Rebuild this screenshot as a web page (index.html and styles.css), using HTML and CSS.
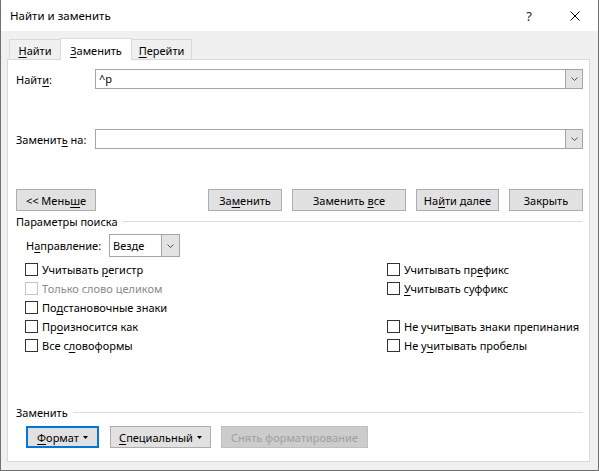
FILE: index.html
```html
<!DOCTYPE html>
<html lang="ru">
<head>
<meta charset="utf-8">
<title>Найти и заменить</title>
<link rel="stylesheet" href="styles.css">
</head>
<body>
<div class="window">
  <div class="titlebar">
    <span class="title">Найти и заменить</span>
    <span class="tb-btn help">?</span>
    <span class="tb-btn close">
      <svg width="10" height="10" viewBox="0 0 10 10"><path d="M0.5 0.5 L9.5 9.5 M9.5 0.5 L0.5 9.5" stroke="#000" stroke-width="1" fill="none"/></svg>
    </span>
  </div>
  <div class="content">
    <div class="tabs">
      <div class="tab tab-first"><span><u>Н</u>айти</span></div>
      <div class="tab active"><span><u>З</u>аменить</span></div>
      <div class="tab tab-last"><span><u>П</u>ерейти</span></div>
    </div>
    <div class="panel">
      <div class="field-row first">
        <span class="field-label">Найт<u>и</u>:</span>
        <div class="combo">
          <span class="combo-text">^p</span>
          <span class="combo-btn"><svg width="7" height="4" viewBox="0 0 7 4"><path d="M0.5 0.5 L3.5 3.5 L6.5 0.5" stroke="#505050" stroke-width="1" fill="none"/></svg></span>
        </div>
      </div>
      <div class="field-row second">
        <span class="field-label">Заменит<u>ь</u> на:</span>
        <div class="combo">
          <span class="combo-text"></span>
          <span class="combo-btn"><svg width="7" height="4" viewBox="0 0 7 4"><path d="M0.5 0.5 L3.5 3.5 L6.5 0.5" stroke="#505050" stroke-width="1" fill="none"/></svg></span>
        </div>
      </div>
      <div class="btn-row">
        <div class="btn w-less"><span>&lt;&lt; Мень<u>ш</u>е</span></div>
        <div class="spacer"></div>
        <div class="btn w-replace"><span>За<u>м</u>енить</span></div>
        <div class="btn w-all"><span>Заменить <u>в</u>се</span></div>
        <div class="btn w-next"><span>На<u>й</u>ти далее</span></div>
        <div class="btn w-close"><span>Закрыть</span></div>
      </div>
      <div class="group-head">
        <span>Параметры поиска</span>
        <span class="rule"></span>
      </div>
      <div class="dir-row">
        <span class="dir-label">Н<u>а</u>правление:</span>
        <div class="select">
          <span class="select-text">Везде</span>
          <span class="select-btn"><svg width="7" height="4" viewBox="0 0 7 4"><path d="M0.5 0.5 L3.5 3.5 L6.5 0.5" stroke="#505050" stroke-width="1" fill="none"/></svg></span>
        </div>
      </div>
      <div class="options">
        <label class="cb"><span class="box"></span><span>Учитывать <u>р</u>егистр</span></label>
        <label class="cb"><span class="box"></span><span>Учитывать пр<u>е</u>фикс</span></label>
        <label class="cb disabled"><span class="box"></span><span>Только слово целиком</span></label>
        <label class="cb"><span class="box"></span><span><u>У</u>читывать суффикс</span></label>
        <label class="cb"><span class="box"></span><span>По<u>д</u>становочные знаки</span></label>
        <span class="empty"></span>
        <label class="cb"><span class="box"></span><span>Пр<u>о</u>износится как</span></label>
        <label class="cb"><span class="box"></span><span>Не учит<u>ы</u>вать знаки препинания</span></label>
        <label class="cb"><span class="box"></span><span>Все с<u>л</u>овоформы</span></label>
        <label class="cb"><span class="box"></span><span>Не у<u>ч</u>итывать пробелы</span></label>
      </div>
      <div class="group-head bottom">
        <span>Заменить</span>
        <span class="rule"></span>
      </div>
      <div class="bottom-row">
        <div class="btn focused w-format"><span><u>Ф</u>ормат</span><svg class="tri" width="5" height="3" viewBox="0 0 5 3"><path d="M0 0 H5 L2.5 3 Z" fill="#000"/></svg></div>
        <div class="btn w-special"><span><u>С</u>пециальный</span><svg class="tri" width="5" height="3" viewBox="0 0 5 3"><path d="M0 0 H5 L2.5 3 Z" fill="#000"/></svg></div>
        <div class="btn disabled w-clear"><span>Снять форматирование</span></div>
      </div>
    </div>
  </div>
</div>
</body>
</html>
```
FILE: styles.css
```css
* { box-sizing: border-box; }
html, body { margin: 0; padding: 0; }
body {
  width: 599px;
  height: 471px;
  overflow: hidden;
  background: #f0f0f0;
  font-family: "Noto Sans", "Open Sans", sans-serif;
  font-size: 11px;
  color: #000;
}
u { text-underline-offset: 2px; }

.window {
  width: 599px;
  height: 471px;
  border: 1px solid #707070;
  border-top: none;
  display: flex;
  flex-direction: column;
  background: #f0f0f0;
}

.titlebar {
  height: 31px;
  flex: none;
  background: #fff;
  display: flex;
  align-items: center;
  padding-left: 9px;
}
.title { flex: 1; font-size: 11.5px; }
.tb-btn {
  width: 46px;
  height: 31px;
  display: flex;
  align-items: center;
  justify-content: center;
}
.help { font-size: 13px; color: #222; }

.content {
  flex: 1;
  display: flex;
  flex-direction: column;
  padding: 7px 8px 8px 6px;
}

.tabs {
  height: 21px;
  flex: none;
  display: flex;
  align-items: flex-end;
  padding-left: 2px;
  position: relative;
  z-index: 1;
}
.tab {
  height: 20px;
  border: 1px solid #d9d9d9;
  border-bottom: none;
  background: #f0f0f0;
  display: flex;
  align-items: center;
  justify-content: center;
  padding-top: 1px;
}
.tab-first { width: 51px; border-right: none; }
.tab-last { width: 60px; border-left: none; }
.tab.active {
  width: 72px;
  height: 22px;
  margin-bottom: -1px;
  background: #fff;
  padding-top: 1px;
}

.panel {
  flex: 1;
  background: #fff;
  border: 1px solid #d9d9d9;
  padding: 0 6px 13px 8px;
  display: flex;
  flex-direction: column;
}

.field-row {
  height: 20px;
  display: flex;
  align-items: center;
}
.field-row.first { margin-top: 9px; }
.field-row.second { margin-top: 40px; }
.field-label { width: 79px; white-space: nowrap; }

.combo {
  flex: 1;
  height: 20px;
  border: 1px solid #a5a5a5;
  display: flex;
  background: #fff;
}
.combo-text { flex: 1; padding-left: 3px; line-height: 18px; }
.combo-btn {
  width: 17px;
  border-left: 1px solid #a5a5a5;
  background: #e3e3e3;
  display: flex;
  align-items: center;
  justify-content: center;
}

.btn-row {
  margin-top: 40px;
  height: 22px;
  display: flex;
}
.spacer { flex: 1; }
.btn {
  height: 22px;
  border: 1px solid #adadad;
  background: #e1e1e1;
  display: flex;
  align-items: center;
  justify-content: center;
  white-space: nowrap;
}
.w-less { width: 80px; }
.w-replace { width: 74px; }
.w-all { width: 114px; margin-left: 10px; }
.w-next { width: 83px; margin-left: 10px; }
.w-close { width: 74px; margin-left: 10px; }

.group-head {
  margin-top: 3px;
  height: 15px;
  display: flex;
  align-items: center;
}
.rule {
  flex: 1;
  height: 1px;
  background: #dcdcdc;
  margin-left: 5px;
}
.group-head.bottom { margin-top: auto; }

.dir-row {
  margin-top: 5px;
  height: 23px;
  display: flex;
  align-items: center;
  padding-left: 10px;
}
.dir-label { width: 83px; white-space: nowrap; }
.select {
  width: 71px;
  height: 23px;
  border: 1px solid #a5a5a5;
  display: flex;
}
.select-text { flex: 1; padding-left: 3px; line-height: 21px; }
.select-btn {
  width: 18px;
  border-left: 1px solid #a5a5a5;
  background: #e3e3e3;
  display: flex;
  align-items: center;
  justify-content: center;
}

.options {
  margin-top: 3px;
  padding-left: 9px;
  display: grid;
  grid-template-columns: 362px 1fr;
  grid-auto-rows: 19px;
}
.cb {
  display: flex;
  align-items: center;
  white-space: nowrap;
}
.box {
  width: 13px;
  height: 13px;
  border: 1px solid #333;
  background: #fff;
  margin-right: 4px;
  flex: none;
}
.cb.disabled { color: #8a8a8a; }
.cb.disabled .box { border-color: #c4c4c4; }

.bottom-row {
  margin-top: 6px;
  height: 22px;
  display: flex;
  padding-left: 10px;
}
.btn.focused { border: 2px solid #0078d7; }
.tri { margin-left: 4px; }
.w-format { width: 73px; }
.w-special { width: 101px; margin-left: 11px; }
.w-clear { width: 147px; margin-left: 10px; }
.btn.disabled {
  background: #cccccc;
  border-color: #bfbfbf;
  color: #a0a0a0;
}
```
